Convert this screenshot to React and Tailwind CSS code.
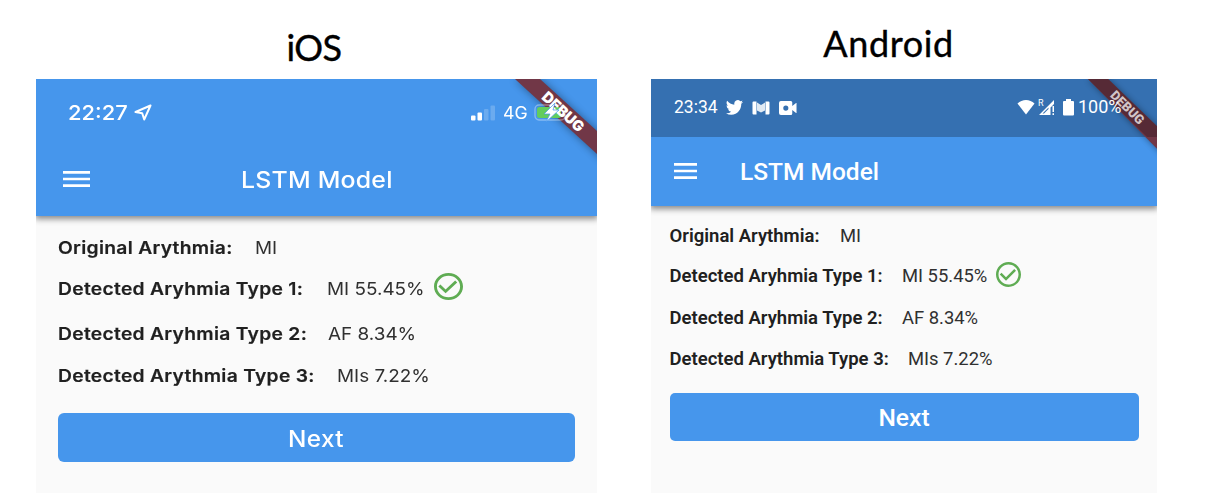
import React from "react";

const iosRows = [
  { label: "Original Arythmia:", value: "MI", row: "h-[41px]", gap: "w-[174px]" },
  { label: "Detected Aryhmia Type 1:", value: "MI 55.45%", row: "h-[41px]", gap: "w-[246px]", ok: true },
  { label: "Detected Aryhmia Type 2:", value: "AF 8.34%", row: "h-[50px]", gap: "w-[247px]" },
  { label: "Detected Arythmia Type 3:", value: "MIs 7.22%", row: "h-[33px]", gap: "w-[256px]" },
];

const androidRows = [
  { label: "Original Arythmia:", value: "MI", row: "h-[41px]", gap: "w-[151px]" },
  { label: "Detected Aryhmia Type 1:", value: "MI 55.45%", row: "h-[40px]", gap: "w-[213px]", ok: true },
  { label: "Detected Aryhmia Type 2:", value: "AF 8.34%", row: "h-[43px]", gap: "w-[213px]" },
  { label: "Detected Arythmia Type 3:", value: "MIs 7.22%", row: "h-[39px]", gap: "w-[219px]" },
];

function Menu({ className }) {
  return (
    <svg className={className} viewBox="0 0 18 12" preserveAspectRatio="none" fill="#fff">
      <path d="M0 0h18v2H0zM0 5h18v2H0zM0 10h18v2H0z" />
    </svg>
  );
}

function Check({ className }) {
  return (
    <svg className={className} viewBox="2 2 20 20" preserveAspectRatio="none" fill="#5fac53">
      <path d="M16.59 7.58 10 14.17l-3.59-3.58L5 12l5 5 8-8zM12 2C6.48 2 2 6.48 2 12s4.480 10 10 10 10-4.480 10-10S17.520 2 12 2zm0 18c-4.420 0-8-3.580-8-8s3.580-8 8-8 8 3.580 8 8-3.580 8-8 8z" />
    </svg>
  );
}

function IosPhone() {
  return (
    <section className="flex w-[561px] flex-col font-['Inter',sans-serif]">
      <h1 className="flex h-[79px] items-end justify-center pb-[12px] pr-[5px] font-['Lato',sans-serif] text-[36px] leading-[40px] tracking-[-0.5px] text-black [-webkit-text-stroke:0.4px_black]">
        <span>iOS</span>
      </h1>
      <div className="relative flex flex-1 flex-col overflow-hidden bg-[#fafafa]">
        <header className="flex h-[137px] shrink-0 flex-col bg-[#4696ec] text-white shadow-[0_2px_6px_1px_rgba(0,0,0,0.45)]">
          <div className="flex h-[68px] items-center pl-[32px] pr-[21px]">
            <span className="w-[60px] origin-left scale-x-[1.07] text-[20.5px] font-medium leading-none">22:27</span>
            <svg className="mb-[2px] ml-[6px] h-[17px] w-[18px]" viewBox="0 0 18 17" fill="none" stroke="#fff" strokeWidth="2" strokeLinejoin="round">
              <path d="M16.500 1.500 1.500 8l6.700 1.200 2 6.300z" />
            </svg>
            <svg className="mb-[1px] ml-auto h-[16px] w-[26px]" viewBox="0 0 26 16" fill="#fff">
              <rect x="1" y="10.500" width="4.500" height="5" rx="1" />
              <rect x="7.500" y="7.500" width="4.500" height="8" rx="1" />
              <rect x="14" y="4" width="4.500" height="11.500" rx="1" opacity=".2" />
              <rect x="20.500" y="0.500" width="4.500" height="15" rx="1" opacity=".2" />
            </svg>
            <span className="ml-[7px] w-[23px] origin-left scale-x-[1.04] text-[17px] leading-none">4G</span>
            <span className="w-[50px]" />
          </div>
          <div className="flex h-[66px] items-center pl-[27px]">
            <Menu className="mb-[2px] h-[16px] w-[27px]" />
            <span className="ml-[150.5px] origin-left scale-x-[1.08] text-[23px] font-medium leading-none tracking-[0.200px]">LSTM Model</span>
          </div>
        </header>
        <div className="flex flex-col px-[22px] pt-[11px] text-[#202020]">
          {iosRows.map((r) => (
            <div key={r.label} className={`flex items-center ${r.row}`}>
              <span className={`origin-left scale-x-[1.1] whitespace-nowrap text-[17.5px] font-semibold leading-none tracking-[0.270px] [-webkit-text-stroke:0.2px_#202020] ${r.gap}`}>{r.label}</span>
              <span className="ml-[23px] origin-left scale-x-[1.08] whitespace-nowrap text-[17.5px] font-normal leading-none text-[#303030]">{r.value}</span>
              {r.ok && <Check className="mb-[4px] ml-[17px] h-[27px] w-[29px]" />}
            </div>
          ))}
          <button className="mt-[21px] flex h-[49px] w-[517px] items-center justify-center rounded-[6px] bg-[#4696ec] pr-[1px] pt-[3px] text-[22.5px] font-medium leading-none text-white">
            <span className="scale-x-[1.08] tracking-[0.4px]">Next</span>
          </button>
        </div>
        <svg className="absolute right-0 top-0 h-[90px] w-[110px]" viewBox="451 0 110 90">
          <defs>
            <filter id="ios-shadow" x="-20%" y="-20%" width="140%" height="140%">
              <feGaussianBlur stdDeviation="4" />
            </filter>
          </defs>
          <path d="M479 0h25l70 64v23z" fill="#000" opacity=".4" filter="url(#ios-shadow)" />
          <path d="M479 0h25l70 64v23z" fill="#713747" />
          <g transform="translate(498 23)">
            <rect x="1" y="3" width="30" height="15" rx="4" fill="none" stroke="#fff" strokeOpacity=".35" strokeWidth="1.300" />
            <rect x="3" y="5" width="24" height="11" rx="2.500" fill="#62cd5d" />
          </g>
          <text x="527" y="33" transform="rotate(42.500 527 33)" textAnchor="middle" dominantBaseline="central" fill="#fff" fontSize="14.800" fontWeight="900" fontFamily="Inter, sans-serif">DEBUG</text>
          <path d="M519 24 508 35h6l-4 8 13-12h-6z" fill="#fff" stroke="#4696ec" strokeWidth=".7" />
        </svg>
      </div>
    </section>
  );
}

function AndroidPhone() {
  return (
    <section className="flex w-[506px] flex-col font-['Roboto',sans-serif]">
      <h1 className="flex h-[79px] items-end justify-center pb-[16px] pr-[31px] font-['Lato',sans-serif] text-[36px] leading-[40px] tracking-[0.6px] text-black [-webkit-text-stroke:0.4px_black]">
        <span>Android</span>
      </h1>
      <div className="relative flex flex-1 flex-col overflow-hidden bg-[#fafafa]">
        <header className="flex h-[127px] shrink-0 flex-col bg-[#4696ec] text-white shadow-[0_2px_6px_1px_rgba(0,0,0,0.45)]">
          <div className="flex h-[58px] items-center bg-[#3570b1] pl-[23px] pr-[24px]">
            <span className="text-[17.500px] leading-none">23:34</span>
            <svg className="mb-[1px] ml-[8px] h-[15px] w-[17px]" viewBox="0 2 24 20" preserveAspectRatio="none" fill="#fff">
              <path d="M23.950 4.570a10 10 0 0 1-2.820.770 4.960 4.960 0 0 0 2.160-2.720c-.950.550-2 .950-3.130 1.180a4.920 4.920 0 0 0-8.380 4.480C7.690 8.090 4.070 6.130 1.640 3.160a4.920 4.920 0 0 0 1.520 6.570 4.900 4.900 0 0 1-2.230-.610v.060a4.920 4.920 0 0 0 3.950 4.830 5 5 0 0 1-2.210.080 4.940 4.940 0 0 0 4.600 3.420A9.870 9.870 0 0 1 0 19.540a13.940 13.940 0 0 0 7.550 2.210c9.050 0 14-7.500 14-13.980l-.010-.630a9.900 9.900 0 0 0 2.410-2.570z" />
            </svg>
            <svg className="mb-[1px] ml-[9px] h-[14px] w-[18px]" viewBox="0 0 18 14" fill="#fff">
              <path d="M1.500.5h3v13h-3A1 1 0 0 1 .5 12.500v-11a1 1 0 0 1 1-1zM13.500 .5h3a1 1 0 0 1 1 1v11a1 1 0 0 1-1 1h-3z" />
              <path d="M5 1.500 9 4l4-2.500v8l-4 2-4-2z" opacity=".85" />
            </svg>
            <svg className="mb-[1px] ml-[9px] h-[14px] w-[18px]" viewBox="0 0 19 14" preserveAspectRatio="none" fill="#fff" fillRule="evenodd">
              <path d="M2 0h10.500a1.500 1.500 0 0 1 1.500 1.500V5l4-3h.5v10H18l-4-3v3.500a1.500 1.500 0 0 1-1.500 1.500H2a2 2 0 0 1-2-2V2a2 2 0 0 1 2-2zm5.200 4.400a2.700 2.700 0 1 0 0 5.400 2.700 2.700 0 0 0 0-5.400z" />
            </svg>
          </div>
          <div className="flex h-[69px] items-center pl-[23px]">
            <Menu className="mb-[1px] h-[16px] w-[23px]" />
            <span className="ml-[43px] pt-[2px] text-[24.500px] font-medium leading-none">LSTM Model</span>
          </div>
        </header>
        <div className="flex flex-col px-[18.5px] pt-[9px] text-[#202020]">
          {androidRows.map((r) => (
            <div key={r.label} className={`flex items-center pt-[1px] ${r.row}`}>
              <span className={`whitespace-nowrap text-[18.5px] font-semibold leading-none ${r.gap}`}>{r.label}</span>
              <span className="ml-[19.5px] whitespace-nowrap text-[18.4px] font-normal leading-none text-[#303030]">{r.value}</span>
              {r.ok && <Check className="mb-[5px] ml-[9px] h-[25px] w-[25px]" />}
            </div>
          ))}
          <button className="mt-[15px] flex h-[48px] w-[469px] items-center justify-center rounded-[5px] bg-[#4696ec] pt-[3px] text-[24.6px] font-medium leading-none text-white">
            Next
          </button>
        </div>
        <svg className="absolute right-0 top-0 h-[90px] w-[90px]" viewBox="416 0 90 90">
          <defs>
            <filter id="android-shadow" x="-20%" y="-20%" width="140%" height="140%">
              <feGaussianBlur stdDeviation="3" />
            </filter>
          </defs>
          <path d="M437 0h20l60 58v23z" fill="#000" opacity=".4" filter="url(#android-shadow)" />
          <path d="M437 0h20l60 58v23z" fill="#713747" />
          <path d="M437 0h20l60 58H496z" fill="#562a36" />
          <text x="476.500" y="28.500" transform="rotate(45 476.500 28.500)" textAnchor="middle" dominantBaseline="central" fill="#d2c4c7" fontSize="13" fontWeight="900" fontFamily="Roboto, sans-serif">DEBUG</text>
        </svg>
        <div className="absolute left-[366px] top-0 flex h-[56px] items-center text-white">
          <svg className="h-[16px] w-[18px]" viewBox="0 0 19 16" fill="#fff" preserveAspectRatio="none">
            <path d="M.5 4.500C5.500-.2 13.500-.2 18.500 4.500L9.500 15.500z" />
          </svg>
          <svg className="ml-[2px] h-[18px] w-[19px]" viewBox="0 0 19 18" fill="#fff">
            <text x="1" y="8" fontSize="9" fontFamily="Roboto, sans-serif">R</text>
            <path d="M17 2v4l-3.500 3.500V17H2zM11.500 9.500 5.500 15.500h1.500l4.500-4.500z" fillRule="evenodd" />
            <path d="M15.500 8h1.500v6h-1.500zM15.500 15.300h1.500V17h-1.500z" />
          </svg>
          <svg className="ml-[7px] h-[17px] w-[11px]" viewBox="0 0 11 17" fill="#fff">
            <path d="M3 0h5v2h2a1 1 0 0 1 1 1v12.500a1 1 0 0 1-1 1H1a1 1 0 0 1-1-1V3a1 1 0 0 1 1-1h2z" />
          </svg>
          <span className="ml-[4px] text-[18px] leading-none">100%</span>
        </div>
      </div>
    </section>
  );
}

export default function App() {
  return (
    <main className="flex h-[493px] w-[1228px] gap-[54px] overflow-hidden bg-white pl-[36px]">
      <IosPhone />
      <AndroidPhone />
    </main>
  );
}
